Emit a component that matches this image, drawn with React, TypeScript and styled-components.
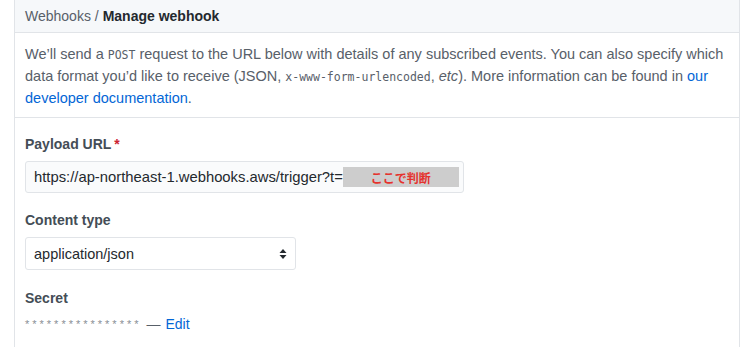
import styled, { createGlobalStyle } from 'styled-components'

const GlobalStyle = createGlobalStyle`
  body {
    margin: 0;
    background: #ffffff;
    font-family: "Liberation Sans", Arial, sans-serif;
    color: #24292e;
  }
`

const Page = styled.div`
  padding: 0 6px 0 14px;
`

const Box = styled.div`
  border: 1px solid #e1e4e8;
  border-top: none;
  height: 360px;
`

const Header = styled.div`
  background: #f6f8fa;
  border-bottom: 1px solid #e1e4e8;
  height: 32px;
  padding: 0 10px;
  display: flex;
  align-items: center;
  font-size: 14px;
  color: #586069;
`

const Strong = styled.strong`
  color: #24292e;
  margin-left: 4px;
`

const Intro = styled.p`
  margin: 0;
  padding: 10px 10px 8px;
  border-bottom: 1px solid #e1e4e8;
  font-size: 14.5px;
  line-height: 22px;
  color: #586069;
`

const Code = styled.code`
  font-family: "DejaVu Sans Mono", "Liberation Mono", monospace;
  font-size: 11.5px;
  line-height: 1;
`

const Link = styled.a`
  color: #0366d6;
  text-decoration: none;
`

const Form = styled.div`
  padding: 16px 10px 0;
  display: flex;
  flex-direction: column;
`

const Field = styled.div<{ $gap?: number }>`
  display: flex;
  flex-direction: column;
  margin-bottom: ${(p) => p.$gap ?? 15}px;
`

const Label = styled.label`
  font-size: 14px;
  font-weight: bold;
  color: #444d56;
  line-height: 20px;
  margin-bottom: 7px;
`

const Required = styled.span`
  color: #cb2431;
  margin-left: 3px;
`

const Input = styled.div`
  width: 439px;
  height: 32px;
  box-sizing: border-box;
  border: 1px solid #e1e4e8;
  border-radius: 3px;
  background: #fafbfc;
  display: flex;
  align-items: center;
  padding: 0 3px 0 8px;
  font-size: 14.8px;
  color: #24292e;
  white-space: nowrap;
  overflow: hidden;
`

const Url = styled.span`
  flex-shrink: 0;
`

const Redacted = styled.span`
  width: 116px;
  height: 20px;
  flex-shrink: 0;
  background: #cdcdcd;
  color: #e5322d;
  font-family: "Noto Sans CJK JP", sans-serif;
  font-weight: bold;
  font-size: 12px;
  display: flex;
  align-items: center;
  justify-content: center;
`

const Select = styled.div`
  width: 271px;
  height: 33px;
  box-sizing: border-box;
  border: 1px solid #e1e4e8;
  border-radius: 3px;
  background: #ffffff;
  display: flex;
  align-items: center;
  justify-content: space-between;
  padding: 0 8px 0 8px;
  font-size: 14.5px;
  color: #24292e;
`

const Secret = styled.div`
  font-size: 14px;
  color: #586069;
  display: flex;
  align-items: center;
  gap: 5px;
  margin-top: 1px;
`

const Stars = styled.span`
  letter-spacing: 3px;
  font-size: 11px;
  color: #8a8f95;
`

export default function App() {
  return (
    <>
      <GlobalStyle />
      <Page>
        <Box>
          <Header>
            Webhooks /<Strong>Manage webhook</Strong>
          </Header>
          <Intro>
            We’ll send a <Code>POST</Code> request to the URL below with details of any
            subscribed events. You can also specify which data format you’d like to receive
            (JSON, <Code>x-www-form-urlencoded</Code>, <em>etc</em>). More information can be
            found in <Link href="#">our developer documentation</Link>.
          </Intro>
          <Form>
            <Field $gap={17}>
              <Label>
                Payload URL<Required>*</Required>
              </Label>
              <Input>
                <Url>https://ap-northeast-1.webhooks.aws/trigger?t=</Url>
                <Redacted>ここで判断</Redacted>
              </Input>
            </Field>
            <Field $gap={18}>
              <Label>Content type</Label>
              <Select>
                application/json
                <svg width="8" height="12" viewBox="0 0 8 12">
                  <path d="M4 1 L7.5 5 H0.5 Z M4 11 L0.5 7 H7.5 Z" fill="#24292e" />
                </svg>
              </Select>
            </Field>
            <Field>
              <Label>Secret</Label>
              <Secret>
                <Stars>****************</Stars>— <Link href="#">Edit</Link>
              </Secret>
            </Field>
          </Form>
        </Box>
      </Page>
    </>
  )
}
